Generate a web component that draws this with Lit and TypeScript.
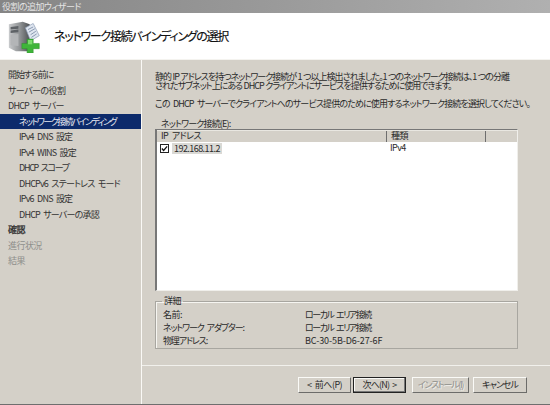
import { LitElement, html, css } from "lit";
import { customElement } from "lit/decorators.js";

const steps: [string, string][] = [
  ["開始する前に", "top t2"],
  ["サーバーの役割", "top"],
  ["DHCP サーバー", "top t1"],
  ["ネットワーク接続バインディング", "sub sel"],
  ["IPv4 DNS 設定", "sub t1"],
  ["IPv4 WINS 設定", "sub t1"],
  ["DHCP スコープ", "sub t3"],
  ["DHCPv6 ステートレス モード", "sub t1"],
  ["IPv6 DNS 設定", "sub t1"],
  ["DHCP サーバーの承認", "sub t1"],
  ["確認", "top bold"],
  ["進行状況", "top dis"],
  ["結果", "top dis"],
];

@customElement("app-root")
export class AppRoot extends LitElement {
  static styles = css`
    :host {
      display: flex;
      flex-direction: column;
      width: 550px;
      height: 405px;
      overflow: hidden;
      background: #d4d0c8;
      color: #2a2a2a;
      font-family: "Noto Sans CJK JP", "Liberation Sans", sans-serif;
      font-size: 9px;
      line-height: 10px;
      font-feature-settings: "palt";
      letter-spacing: -0.55px;
      word-spacing: 2px;
    }
    .titlebar {
      height: 13px;
      flex: none;
      background: linear-gradient(90deg, #858585, #9a9a9a 50%, #b0b0b0);
      color: #e4e4e4;
      padding: 1px 0 0 2px;
      box-sizing: border-box;
      font-size: 9px;
      line-height: 11px;
    }
    .header {
      height: 46px;
      flex: none;
      background: #fff;
      display: flex;
      align-items: center;
      gap: 13px;
      padding: 0 0 0 8px;
      box-sizing: border-box;
    }
    .header svg { flex: none; margin-top: 1px; }
    .header h1 {
      margin: 0;
      font-size: 12px;
      font-weight: 400;
      color: #111;
      letter-spacing: -1.26px;
      -webkit-text-stroke: 0.15px #111;
    }
    .main {
      flex: 1;
      display: flex;
      min-height: 0;
      border-top: 1px solid #f4f3ef;
    }
    .side {
      width: 142px;
      flex: none;
      padding-top: 7px;
      box-sizing: border-box;
      border-right: 1px solid #faf9f6;
      display: flex;
      flex-direction: column;
    }
    .step {
      height: 15.5px;
      line-height: 15px;
      padding-left: 8px;
      color: #333;
      white-space: nowrap;
    }
    .step.t1 { letter-spacing: -0.8px; }
    .step.t2 { letter-spacing: -1.1px; }
    .step.t3 { letter-spacing: -1.3px; }
    .step.sub { padding-left: 19px; }
    .step.sel { background: #0c2a6b; color: #e8e8f0; letter-spacing: -1.6px; }
    .step.bold { -webkit-text-stroke: 0.25px #222; }
    .step.dis { color: #8f8f8c; }
    .content {
      flex: 1;
      min-width: 0;
      display: flex;
      flex-direction: column;
    }
    .body {
      flex: 1;
      padding: 12px 0 0 13px;
      display: flex;
      flex-direction: column;
      box-sizing: border-box;
      min-height: 0;
    }
    p { margin: 0; line-height: 9px; letter-spacing: -1px; word-spacing: 0.5px; width: 360px; }
    .p2 { margin-top: 9px; letter-spacing: -0.85px; word-spacing: 2px; white-space: nowrap; width: auto; }
    .label { margin: 11px 0 0 6px; line-height: 10px; letter-spacing: -0.85px; }
    .list {
      width: 363px;
      height: 162px;
      flex: none;
      margin-top: 0;
      box-sizing: border-box;
      background: #fff;
      border: 1px solid #777;
      border-left-width: 2px;
      border-top-width: 1px;
      border-right-color: #f0efeb;
      border-bottom-color: #f0efeb;
    }
    .cols {
      height: 12px;
      display: grid;
      grid-template-columns: 230px 99px 1fr;
      background: #d4d0c8;
      border-top: 1px solid #e9e7e1;
      box-sizing: border-box;
      line-height: 10px;
    }
    .cols span {
      padding-left: 4px;
      border-right: 1px solid #6e6e6e;
      white-space: nowrap;
    }
    .cols span:last-child { border-right: 0; }
    .row {
      display: grid;
      grid-template-columns: 230px 1fr;
      height: 12px;
      align-items: center;
    }
    .row .ip { display: flex; align-items: center; padding-left: 3px; gap: 3px; }
    .row .addr { background: #dad9d5; padding: 0 2px; line-height: 11px; }
    .row .type { padding-left: 3px; }
    .cb {
      width: 7px;
      height: 7px;
      border: 1px solid #222;
      box-sizing: content-box;
      display: block;
      flex: none;
      background: #fff;
    }
    fieldset.detail {
      width: 363px;
      height: 53px;
      flex: none;
      box-sizing: border-box;
      margin: 5px 0 0;
      padding: 0 0 0 7px;
      border: 1px solid #a8a6a0;
      box-shadow: inset 1px 1px 0 #f6f5f1;
    }
    legend { padding: 0 2px; margin-left: -1px; line-height: 10px; }
    .grid {
      display: grid;
      grid-template-columns: 142px 1fr;
      grid-auto-rows: 13px;
      line-height: 13px;
      margin-top: 2px;
    }
    .grid .a { letter-spacing: -1.15px; }
    .grid .n { letter-spacing: -1.5px; }
    .mac { letter-spacing: -0.1px; }
    .footer {
      height: 39px;
      flex: none;
      border-top: 1px solid #f1f0ec;
      display: flex;
      justify-content: flex-end;
      padding: 11px 23px 0 0;
      box-sizing: border-box;
    }
    button {
      width: 53px;
      height: 16px;
      box-sizing: border-box;
      padding: 0;
      margin: 0;
      background: #d4d0c8;
      font: inherit;
      letter-spacing: inherit;
      word-spacing: inherit;
      font-feature-settings: inherit;
      color: #2a2a2a;
      border: 1px solid;
      border-color: #fafaf7 #6c6c6a #6c6c6a #fafaf7;
      white-space: nowrap;
    }
    button.def {
      border: 1px solid #222;
      box-shadow: inset -1px -1px 0 #777, inset 1px 1px 0 #fafaf7;
      margin-left: 2px;
      letter-spacing: -0.8px;
    }
    button.dis {
      color: #8f8f8c;
      text-shadow: 1px 1px 0 #f2f1ed;
      width: 57px;
      margin-left: 6px;
      letter-spacing: -1.3px;
    }
    button.wide { margin-left: 4px; width: 54px; letter-spacing: -1px; }
    .bottomline { height: 1px; background: #6e6e6e; flex: none; }
  `;

  render() {
    return html`
      <div class="titlebar">役割の追加ウィザード</div>
      <div class="header">
        <svg width="33" height="33" viewBox="0 0 38 38" aria-hidden="true">
          <defs>
            <linearGradient id="srv" x1="0" x2="1" y1="0" y2="0">
              <stop offset="0" stop-color="#c9cbcd"/>
              <stop offset="0.55" stop-color="#8d9092"/>
              <stop offset="1" stop-color="#4e5154"/>
            </linearGradient>
          </defs>
          <path d="M1 5 L17 2 L25 5 L25 36 L9 36 L1 32 Z" fill="url(#srv)"/>
          <path d="M3 8 L12 7 L12 10 L3 11 Z M3 12 L12 11 L12 14 L3 15 Z" fill="#5e6266"/>
          <path d="M3 17 L12 16 L12 30 L3 29 Z" fill="#b3b5b7"/>
          <path d="M20 9 L29 4 L36 18 L26 24 Z" fill="#dfe6f0" stroke="#8b9bb3" stroke-width="0.8"/>
          <path d="M23 11 L29 8 M24 14 L31 10 M26 17 L32 13 M27 20 L33 16" stroke="#7e8ea8" stroke-width="1"/>
          <path d="M22 22 H29 V27 H36 V33 H29 V38 H22 V33 H16 V27 H22 Z" fill="#3fb53a" stroke="#2f8f2c" stroke-width="0.6"/>
          <path d="M23 23 H28 V28 H23 Z" fill="#7ddc6e"/>
        </svg>
        <h1>ネットワーク接続バインディングの選択</h1>
      </div>
      <div class="main">
        <div class="side">
          ${steps.map(([t, c]) => html`<div class="step ${c}">${t}</div>`)}
        </div>
        <div class="content">
          <div class="body">
            <p>静的 IP アドレスを持つネットワーク接続が 1 つ以上検出されました。1 つのネットワーク接続は、1 つの分離されたサブネット上にある DHCP クライアントにサービスを提供するために使用できます。</p>
            <p class="p2">この DHCP サーバーでクライアントへのサービス提供のために使用するネットワーク接続を選択してください。</p>
            <div class="label">ネットワーク接続(E):</div>
            <div class="list">
              <div class="cols"><span>IP アドレス</span><span>種類</span><span></span></div>
              <div class="row">
                <div class="ip">
                  <svg class="cb" viewBox="0 0 8 8" aria-hidden="true">
                    <path d="M1 4 L3 6.2 L7 1.5" fill="none" stroke="#111" stroke-width="1.5"/>
                  </svg>
                  <span class="addr">192.168.11.2</span>
                </div>
                <div class="type">IPv4</div>
              </div>
            </div>
            <fieldset class="detail">
              <legend>詳細</legend>
              <div class="grid">
                <span>名前:</span><span class="n">ローカル エリア接続</span>
                <span class="a">ネットワーク アダプター:</span><span class="n">ローカル エリア接続</span>
                <span class="a">物理アドレス:</span><span class="mac">BC-30-5B-D6-27-6F</span>
              </div>
            </fieldset>
          </div>
          <div class="footer">
            <button>&lt; 前へ(P)</button>
            <button class="def">次へ(N) &gt;</button>
            <button class="dis">インストール(I)</button>
            <button class="wide">キャンセル</button>
          </div>
        </div>
      </div>
      <div class="bottomline"></div>
    `;
  }
}
